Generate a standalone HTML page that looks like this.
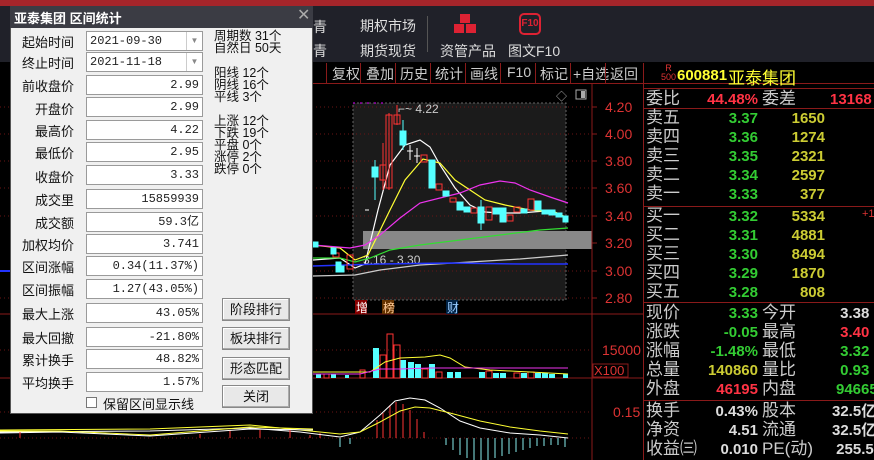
<!DOCTYPE html>
<html><head><meta charset="utf-8"><style>
*{margin:0;padding:0;box-sizing:border-box}
body{width:874px;height:460px;background:#000;position:relative;overflow:hidden;font-family:"Liberation Sans","Noto Sans CJK SC",sans-serif}
.a{position:absolute;white-space:nowrap}
.tb{font-size:14px;color:#ddd}
.btn{font-size:14px;color:#ccc;top:64px}
.rl{font-size:17px;color:#ccc;left:646px;line-height:19px}
.num{font-weight:bold;font-size:15px;text-align:right;line-height:19px}
.g{color:#3c3}.y{color:#cc3}.r{color:#f34}.w{color:#ddd}
.lab{font-size:13px;color:#111;text-align:right;width:64px;left:10px}
.fld{left:86px;width:117px;height:20px;background:#fff;border:1px solid #9a9a9a;font-family:"Liberation Mono","Noto Sans CJK SC",monospace;font-size:12px;color:#222;text-align:right;padding-right:3px;line-height:18px}
.rt{font-size:12.5px;color:#111;left:214px;line-height:12px}
.bt{left:222px;width:68px;height:23px;background:#e8e8e8;border:1px solid #888;box-shadow:inset -1px -1px #aaa,inset 1px 1px #fff;font-size:13px;color:#111;text-align:center;line-height:21px}
</style></head><body>
<div class="a" style="left:0;top:0;width:874px;height:6px;background:#a5252a"></div>
<div class="a" style="left:0;top:6px;width:874px;height:56px;background:#202129"></div>
<div class="a tb" style="left:313px;top:17px">青</div>
<div class="a tb" style="left:313px;top:41px">青</div>
<div class="a tb" style="left:360px;top:16px">期权市场</div>
<div class="a tb" style="left:360px;top:41px">期货现货</div>
<div class="a" style="left:427px;top:16px;width:1px;height:36px;background:#555"></div>
<svg class="a" style="left:452px;top:13px" width="26" height="22"><g fill="#d23"><rect x="8" y="1" width="10" height="9"/><rect x="2" y="11" width="10" height="9"/><rect x="14" y="11" width="10" height="9"/></g></svg>
<div class="a tb" style="left:440px;top:41px">资管产品</div>
<div class="a" style="left:519px;top:13px;width:22px;height:22px;border:2px solid #d23;border-radius:5px;color:#d23;font-size:10px;font-weight:bold;text-align:center;line-height:18px">F10</div>
<div class="a tb" style="left:508px;top:41px">图文F10</div>
<!-- button row -->
<div class="a" style="left:313px;top:83px;width:561px;height:1px;background:#8a1a1a"></div>
<div class="a" style="left:326px;top:63px;width:1px;height:20px;background:#8a1a1a"></div>
<div class="a btn" style="left:332px">复权</div><div class="a" style="left:360px;top:63px;width:1px;height:20px;background:#8a1a1a"></div>
<div class="a btn" style="left:366px">叠加</div><div class="a" style="left:395px;top:63px;width:1px;height:20px;background:#8a1a1a"></div>
<div class="a btn" style="left:400px">历史</div><div class="a" style="left:430px;top:63px;width:1px;height:20px;background:#8a1a1a"></div>
<div class="a btn" style="left:435px">统计</div><div class="a" style="left:465px;top:63px;width:1px;height:20px;background:#8a1a1a"></div>
<div class="a btn" style="left:470px">画线</div><div class="a" style="left:500px;top:63px;width:1px;height:20px;background:#8a1a1a"></div>
<div class="a btn" style="left:507px">F10</div><div class="a" style="left:535px;top:63px;width:1px;height:20px;background:#8a1a1a"></div>
<div class="a btn" style="left:540px">标记</div><div class="a" style="left:570px;top:63px;width:1px;height:20px;background:#8a1a1a"></div>
<div class="a btn" style="left:573px">+自选</div><div class="a" style="left:605px;top:63px;width:1px;height:20px;background:#8a1a1a"></div>
<div class="a btn" style="left:610px">返回</div>
<!-- chart -->
<svg class="a" style="left:0;top:84px" width="643" height="376">
<g transform="translate(0,-84)">
<rect x="353" y="103" width="213" height="197" fill="#1b1b1b"/>
<rect x="353" y="103" width="213" height="197" fill="none" stroke="#666" stroke-dasharray="2,2"/>
<rect x="363" y="231" width="229" height="18" fill="#888"/>
<g stroke="#6a1515" stroke-dasharray="1,3"><line x1="0" y1="107" x2="592" y2="107"/><line x1="0" y1="134" x2="592" y2="134"/><line x1="0" y1="161" x2="592" y2="161"/><line x1="0" y1="188" x2="592" y2="188"/><line x1="0" y1="216" x2="592" y2="216"/><line x1="0" y1="271" x2="592" y2="271"/><line x1="0" y1="298" x2="592" y2="298"/><line x1="0" y1="350" x2="592" y2="350"/><line x1="0" y1="412" x2="592" y2="412"/><line x1="0" y1="438" x2="592" y2="438"/></g>
<line x1="592" y1="84" x2="592" y2="460" stroke="#8a1a1a"/>
<line x1="0" y1="314" x2="643" y2="314" stroke="#8a1a1a"/>
<line x1="0" y1="378" x2="643" y2="378" stroke="#8a1a1a"/>
<g stroke="#8a1a1a"><line x1="592" y1="107" x2="597" y2="107"/><line x1="592" y1="134" x2="597" y2="134"/><line x1="592" y1="161" x2="597" y2="161"/><line x1="592" y1="188" x2="597" y2="188"/><line x1="592" y1="216" x2="597" y2="216"/><line x1="592" y1="243" x2="597" y2="243"/><line x1="592" y1="271" x2="597" y2="271"/><line x1="592" y1="298" x2="597" y2="298"/></g>
<g font-family="Liberation Sans" font-size="14" fill="#d33"><text x="605" y="112">4.20</text><text x="605" y="139">4.00</text><text x="605" y="166">3.80</text><text x="605" y="193">3.60</text><text x="605" y="221">3.40</text><text x="605" y="248">3.20</text><text x="605" y="276">3.00</text><text x="605" y="303">2.80</text><text x="602" y="355">15000</text><text x="613" y="417">0.15</text></g>
<rect x="593" y="364" width="35" height="13" fill="none" stroke="#8a1a1a"/><text x="594" y="375" font-family="Liberation Sans" font-size="13" fill="#d33">X100</text>
<text x="556" y="100" fill="#aaa" font-size="11">◇</text><rect x="576" y="90" width="10" height="9" fill="none" stroke="#aaa"/><rect x="581" y="91" width="4" height="7" fill="#aaa"/>
<text x="398" y="113" fill="#ccc" font-family="Liberation Sans" font-size="12">⌐~ 4.22</text>
<text x="363" y="264" fill="#ccc" font-family="Liberation Sans" font-size="12">3.16 - 3.30</text>
<g stroke="#d0f" stroke-dasharray="2,5"><line x1="353" y1="103" x2="385" y2="103"/></g>
<polyline fill="none" stroke="#fff" stroke-width="1.2" points="313,260 340,258 355,268 365,264 378,210 390,165 405,145 420,140 430,147 440,165 455,188 470,205 485,212 500,213 520,213 545,211 568,218"/>
<polyline fill="none" stroke="#ff3" stroke-width="1.2" points="313,245 340,248 355,260 368,255 390,210 405,180 423,159 440,163 455,180 470,190 485,200 505,205 530,210 555,212 568,218"/>
<polyline fill="none" stroke="#e3e" stroke-width="1.2" points="313,245 350,248 365,245 380,235 400,218 420,203 440,198 460,193 480,185 500,181 515,183 530,190 550,197 568,203"/>
<polyline fill="none" stroke="#3d3" stroke-width="1.2" points="313,258 340,258 355,262 370,258 390,250 420,245 460,240 500,235 540,230 568,228"/>
<polyline fill="none" stroke="#ccc" stroke-width="1.2" points="313,276 355,275 380,270 420,265 470,262 520,259 568,255"/>
<polyline fill="none" stroke="#23f" stroke-width="1.5" points="313,266 380,264 450,263 520,264 568,264"/>
<g stroke-width="1">
<g stroke="#f33" fill="none"><line x1="383" y1="143" x2="383" y2="190"/><rect x="380" y="165" width="6" height="15"/><line x1="389" y1="113" x2="389" y2="190"/><rect x="386" y="115" width="6" height="73"/><line x1="397" y1="105" x2="397" y2="125"/><rect x="394" y="115" width="6" height="9"/><rect x="421" y="155" width="6" height="7"/><rect x="436" y="184" width="6" height="6"/><rect x="450" y="198" width="6" height="4"/><rect x="471" y="208" width="6" height="5"/><rect x="486" y="207" width="6" height="13"/><rect x="507" y="215" width="6" height="6"/><rect x="514" y="207" width="6" height="5"/><rect x="528" y="199" width="6" height="11"/><rect x="347" y="255" width="6" height="14"/><rect x="333" y="253" width="6" height="4"/></g>
<g fill="#5ff" stroke="#5ff"><rect x="372" y="167" width="6" height="10"/><line x1="375" y1="160" x2="375" y2="200"/><rect x="400" y="131" width="6" height="14"/><line x1="403" y1="120" x2="403" y2="150"/><rect x="429" y="160" width="6" height="28"/><rect x="443" y="191" width="6" height="5"/><rect x="457" y="202" width="6" height="8"/><rect x="464" y="207" width="6" height="5"/><rect x="478" y="207" width="6" height="16"/><line x1="481" y1="200" x2="481" y2="230"/><rect x="493" y="208" width="6" height="6"/><rect x="500" y="208" width="6" height="14"/><rect x="521" y="209" width="6" height="4"/><rect x="535" y="201" width="6" height="9"/><rect x="542" y="210" width="6" height="4"/><rect x="549" y="210" width="6" height="5"/><rect x="556" y="213" width="6" height="4"/><rect x="563" y="216" width="5" height="6"/><rect x="331" y="248" width="5" height="6"/><rect x="336" y="262" width="5" height="10"/><rect x="340" y="266" width="4" height="6"/><rect x="313" y="242" width="5" height="5"/></g>
<g stroke="#fff"><line x1="410" y1="145" x2="410" y2="160"/><line x1="407" y1="151" x2="413" y2="151"/><line x1="417" y1="148" x2="417" y2="163"/><line x1="414" y1="156" x2="420" y2="156"/><line x1="365" y1="210" x2="369" y2="210"/></g>
</g>
<rect x="355" y="300" width="12" height="14" fill="#800"/><text x="356" y="312" fill="#fff" font-size="12" font-family="Noto Sans CJK SC">增</text>
<rect x="382" y="300" width="12" height="14" fill="#630"/><text x="383" y="312" fill="#fc9" font-size="12" font-family="Noto Sans CJK SC">榜</text>
<rect x="446" y="300" width="12" height="14" fill="#024"/><text x="447" y="312" fill="#9cf" font-size="12" font-family="Noto Sans CJK SC">财</text>
<g fill="#5ff"><rect x="373" y="348" width="6" height="30"/><rect x="400" y="360" width="6" height="18"/><rect x="408" y="362" width="6" height="16"/><rect x="415" y="364" width="6" height="14"/><rect x="429" y="364" width="6" height="14"/><rect x="447" y="372" width="6" height="6"/><rect x="455" y="372" width="6" height="6"/><rect x="479" y="372" width="6" height="6"/><rect x="493" y="373" width="6" height="5"/><rect x="500" y="373" width="6" height="5"/><rect x="521" y="373" width="6" height="5"/><rect x="535" y="373" width="6" height="5"/><rect x="542" y="373" width="6" height="5"/><rect x="549" y="374" width="6" height="4"/><rect x="563" y="374" width="5" height="4"/><rect x="316" y="374" width="5" height="4"/><rect x="331" y="374" width="5" height="4"/><rect x="345" y="375" width="4" height="3"/></g>
<g fill="none" stroke="#f33"><rect x="380" y="355" width="6" height="23"/><rect x="387" y="334" width="6" height="44"/><rect x="394" y="345" width="6" height="33"/><rect x="422" y="369" width="6" height="9"/><rect x="436" y="372" width="6" height="6"/><rect x="486" y="371" width="6" height="7"/><rect x="514" y="373" width="6" height="5"/><rect x="528" y="372" width="6" height="6"/><rect x="360" y="370" width="5" height="8"/><rect x="324" y="374" width="5" height="4"/></g>
<polyline fill="none" stroke="#ff3" points="313,372 370,372 385,362 400,358 425,357 440,355 450,358 465,367 490,370 530,372 568,374"/>
<polyline fill="none" stroke="#e3e" points="313,374 360,374 380,369 400,369 430,368 480,368 568,368"/>
<g stroke="#f33"><line x1="377" y1="438" x2="377" y2="420"/><line x1="383" y1="438" x2="383" y2="413"/><line x1="390" y1="438" x2="390" y2="405"/><line x1="396" y1="438" x2="396" y2="402"/><line x1="403" y1="438" x2="403" y2="404"/><line x1="410" y1="438" x2="410" y2="410"/><line x1="417" y1="438" x2="417" y2="419"/><line x1="424" y1="438" x2="424" y2="432"/><line x1="310" y1="438" x2="310" y2="435"/><line x1="320" y1="438" x2="320" y2="433"/></g>
<g stroke="#8ee"><line x1="446" y1="438" x2="446" y2="445"/><line x1="453" y1="438" x2="453" y2="450"/><line x1="460" y1="438" x2="460" y2="455"/><line x1="467" y1="438" x2="467" y2="458"/><line x1="474" y1="438" x2="474" y2="460"/><line x1="481" y1="438" x2="481" y2="460"/><line x1="488" y1="438" x2="488" y2="460"/><line x1="495" y1="438" x2="495" y2="458"/><line x1="502" y1="438" x2="502" y2="456"/><line x1="509" y1="438" x2="509" y2="454"/><line x1="516" y1="438" x2="516" y2="452"/><line x1="523" y1="438" x2="523" y2="450"/><line x1="530" y1="438" x2="530" y2="448"/><line x1="537" y1="438" x2="537" y2="446"/><line x1="544" y1="438" x2="544" y2="446"/><line x1="551" y1="438" x2="551" y2="445"/><line x1="558" y1="438" x2="558" y2="445"/><line x1="565" y1="438" x2="565" y2="447"/><line x1="340" y1="438" x2="340" y2="447"/><line x1="350" y1="438" x2="350" y2="444"/></g>
<polyline fill="none" stroke="#fff" points="0,432 150,431 250,428 300,432 340,437 360,432 380,415 395,401 410,398 425,400 440,408 460,421 480,428 510,433 540,435 568,438"/>
<polyline fill="none" stroke="#ff3" points="0,430 150,429 250,425 300,430 340,434 360,432 380,422 400,411 415,407 430,408 450,413 480,421 510,427 540,431 568,434"/>
</g></svg>
<!-- right panel -->
<div class="a" style="left:643px;top:63px;width:1px;height:397px;background:#8a1a1a"></div>
<div class="a" style="left:661px;top:64px;color:#d33;font-size:9px;line-height:9px;text-align:center">R<br>500</div>
<div class="a" style="left:677px;top:67px;color:#ff3;font-size:15px;font-weight:bold">600881</div>
<div class="a" style="left:728px;top:64px;color:#ff3;font-size:17px">亚泰集团</div>
<div class="a" style="left:644px;top:88px;width:230px;height:1px;background:#8a1a1a"></div>
<div class="a" style="left:644px;top:108px;width:230px;height:1px;background:#8a1a1a"></div>
<div class="a" style="left:644px;top:206px;width:230px;height:1px;background:#8a1a1a"></div>
<div class="a" style="left:644px;top:302px;width:230px;height:1px;background:#8a1a1a"></div>
<div class="a" style="left:644px;top:400px;width:230px;height:1px;background:#8a1a1a"></div>
<div class="a rl" style="top:89px">委比</div>
<div class="a num r" style="left:690px;top:90px;width:68px">44.48%</div>
<div class="a rl" style="left:762px;top:89px">委差</div>
<div class="a num r" style="left:830px;top:90px;width:60px;text-align:left">13168</div>
<div class="a rl" style="top:108px">卖五<br>卖四<br>卖三<br>卖二<br>卖一</div>
<div class="a num g" style="left:700px;top:109px;width:58px">3.37<br>3.36<br>3.35<br>3.34<br>3.33</div>
<div class="a num y" style="left:770px;top:109px;width:55px">1650<br>1274<br>2321<br>2597<br>377</div>
<div class="a rl" style="top:206px">买一<br>买二<br>买三<br>买四<br>买五</div>
<div class="a num g" style="left:700px;top:207px;width:58px">3.32<br>3.31<br>3.30<br>3.29<br>3.28</div>
<div class="a num y" style="left:770px;top:207px;width:55px">5334<br>4881<br>8494<br>1870<br>808</div>
<div class="a" style="left:862px;top:208px;color:#d33;font-size:11px">+1</div>
<div class="a rl" style="top:303px">现价<br>涨跌<br>涨幅<br>总量<br>外盘</div>
<div class="a num" style="left:670px;top:304px;width:88px"><span class="g">3.33</span><br><span class="g">-0.05</span><br><span class="g">-1.48%</span><br><span class="y">140860</span><br><span class="r">46195</span></div>
<div class="a rl" style="left:762px;top:303px">今开<br>最高<br>最低<br>量比<br>内盘</div>
<div class="a num" style="left:836px;top:304px;width:50px;text-align:left"><span class="w">&nbsp;3.38</span><br><span class="r">&nbsp;3.40</span><br><span class="g">&nbsp;3.32</span><br><span class="g">&nbsp;0.93</span><br><span class="g">94665</span></div>
<div class="a rl" style="top:401px">换手<br>净资<br>收益㈢</div>
<div class="a num w" style="left:680px;top:402px;width:78px">0.43%<br>4.51<br>0.010</div>
<div class="a rl" style="left:762px;top:401px">股本<br>流通<br>PE(动)</div>
<div class="a num w" style="left:832px;top:402px;width:60px;text-align:left;font-weight:bold">32.5亿<br>32.5亿<br>&nbsp;255.5</div>
<div class="a" style="left:0;top:270px;width:10px;height:2px;background:#23f"></div>
<!-- dialog -->
<div class="a" style="left:10px;top:6px;width:303px;height:408px;background:#f0f0f0;border:1px solid #555"></div>
<div class="a" style="left:10px;top:6px;width:303px;height:22px;background:#3b3c44"></div>
<div class="a" style="left:14px;top:8px;color:#fff;font-size:13px;font-weight:bold">亚泰集团 区间统计</div>
<div class="a" style="left:297px;top:5px;color:#aaa;font-size:16px">✕</div>
<div class="a lab" style="top:32px">起始时间</div>
<div class="a fld" style="top:31px;text-align:left;padding-left:3px">2021-09-30</div>
<div class="a" style="left:186px;top:32px;width:16px;height:18px;border-left:1px solid #ccc;color:#888;font-size:8px;text-align:center;line-height:18px">▼</div>
<div class="a lab" style="top:53px">终止时间</div>
<div class="a fld" style="top:52px;text-align:left;padding-left:3px">2021-11-18</div>
<div class="a" style="left:186px;top:53px;width:16px;height:18px;border-left:1px solid #ccc;color:#888;font-size:8px;text-align:center;line-height:18px">▼</div>
<div class="a lab" style="top:76px">前收盘价</div><div class="a fld" style="top:75px">2.99</div>
<div class="a lab" style="top:99px">开盘价</div><div class="a fld" style="top:97px">2.99</div>
<div class="a lab" style="top:121px">最高价</div><div class="a fld" style="top:120px">4.22</div>
<div class="a lab" style="top:143px">最低价</div><div class="a fld" style="top:142px">2.95</div>
<div class="a lab" style="top:167px">收盘价</div><div class="a fld" style="top:165px">3.33</div>
<div class="a lab" style="top:190px">成交里</div><div class="a fld" style="top:189px">15859939</div>
<div class="a lab" style="top:213px">成交额</div><div class="a fld" style="top:212px">59.3亿</div>
<div class="a lab" style="top:235px">加权均价</div><div class="a fld" style="top:234px">3.741</div>
<div class="a lab" style="top:257px">区间涨幅</div><div class="a fld" style="top:256px">0.34(11.37%)</div>
<div class="a lab" style="top:280px">区间振幅</div><div class="a fld" style="top:279px">1.27(43.05%)</div>
<div class="a lab" style="top:304px">最大上涨</div><div class="a fld" style="top:303px">43.05%</div>
<div class="a lab" style="top:328px">最大回撤</div><div class="a fld" style="top:327px">-21.80%</div>
<div class="a lab" style="top:350px">累计换手</div><div class="a fld" style="top:349px">48.82%</div>
<div class="a lab" style="top:373px">平均换手</div><div class="a fld" style="top:372px">1.57%</div>
<div class="a" style="left:86px;top:397px;width:11px;height:11px;background:#fff;border:1px solid #777"></div>
<div class="a" style="left:103px;top:394px;font-size:13px;color:#111">保留区间显示线</div>
<div class="a rt" style="top:30px">周期数 31个<br>自然日 50天</div>
<div class="a rt" style="top:67px">阳线 12个<br>阴线 16个<br>平线 3个</div>
<div class="a rt" style="top:115px">上涨 12个<br>下跌 19个<br>平盘 0个<br>涨停 2个<br>跌停 0个</div>
<div class="a bt" style="top:298px">阶段排行</div>
<div class="a bt" style="top:327px">板块排行</div>
<div class="a bt" style="top:357px">形态匹配</div>
<div class="a bt" style="top:385px">关闭</div>
<svg class="a" style="left:0;top:414px" width="313" height="46"><polyline fill="none" stroke="#ff3" points="0,17 60,17 150,21 250,13 313,15"/><polyline fill="none" stroke="#fff" points="0,19 60,18 150,22 250,15 313,16"/><g stroke="#f33"><line x1="20" y1="24" x2="20" y2="18"/><line x1="200" y1="24" x2="200" y2="20"/><line x1="230" y1="24" x2="230" y2="17"/><line x1="260" y1="24" x2="260" y2="16"/><line x1="290" y1="24" x2="290" y2="16"/></g><line x1="0" y1="24" x2="313" y2="24" stroke="#6a1515" stroke-dasharray="1,3"/></svg>
</body></html>
